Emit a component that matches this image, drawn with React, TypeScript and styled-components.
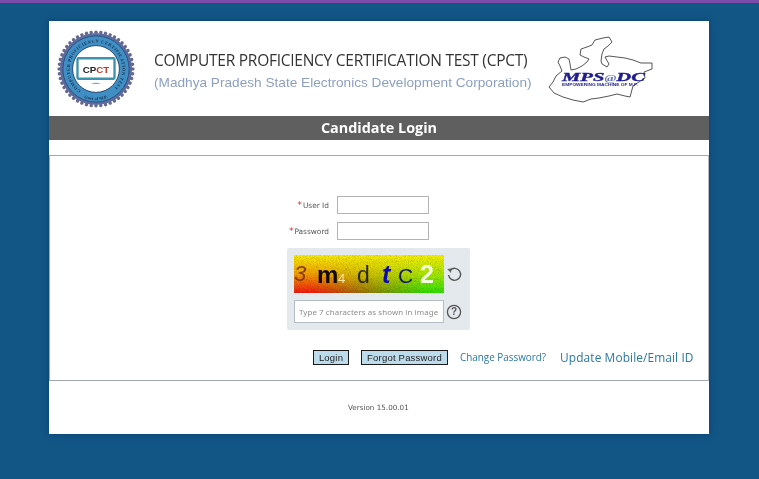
import { createGlobalStyle, styled } from 'styled-components'
import { useId } from 'react'

const Global = createGlobalStyle`
    html, body {
        margin: 0;
        padding: 0;
        height: 100%;
        background: #125686;
    }
    #root { height: 100%; }
`
const Page = styled.div`
    width: 759px;
    height: 479px;
    overflow: hidden;
    background: #125686;
    border-top: 3px solid #7a4ba8;
    box-sizing: border-box;
    padding-top: 18px;
`
const Card = styled.main`
    width: 660px;
    height: 413px;
    margin-left: 49px;
    background: #fff;
    box-shadow: 0 0 6px rgba(6, 50, 90, 0.65);
`
const Banner = styled.header`
    height: 95px;
    display: flex;
    align-items: center;
    padding-left: 8px;
`
const Titles = styled.div`
    margin-left: 19px;
    width: 393px;
    padding-top: 5px;
`
const MainTitle = styled.div`
    font: 15.5px/20px "Open Sans", "Noto Sans", sans-serif;
    color: #333;
    white-space: nowrap;
    letter-spacing: -0.26px;
`
const SubTitle = styled.div`
    font: 13.65px/20px "Liberation Sans", sans-serif;
    color: #8d9fc0;
    white-space: nowrap;
    margin-top: 3px;
`
const MapLogo = styled.svg`
    flex-shrink: 0;
`
const TitleBar = styled.h1`
    margin: 0;
    height: 24px;
    background: #5f5f5f;
    color: #fff;
    font: bold 14.4px/24px "Open Sans", sans-serif;
    text-align: center;
`
const Panel = styled.section`
    margin-top: 15px;
    height: 226px;
    box-sizing: border-box;
    border: 1px solid #a3a7ae;
    border-right-color: #b9bcc2;
    padding-top: 40px;
    display: flex;
    flex-direction: column;
`
const Row = styled.div`
    display: flex;
    align-items: center;
    height: 18px;
    margin-bottom: 8px;
`
const Label = styled.label`
    width: 279px;
    text-align: right;
    font: 7.4px/16px "DejaVu Sans", sans-serif;
    color: #555;
    margin-right: 8px;
`
const Star = styled.span`
    color: #d9302c;
    font-size: 9px;
    margin-right: 1px;
`
const TextInput = styled.input`
    width: 92px;
    height: 18px;
    box-sizing: border-box;
    border: 1px solid #b4b4b4;
    background: #fff;
    padding: 0;
`
const CaptchaBox = styled.div`
    margin-left: 237px;
    width: 183px;
    height: 82px;
    box-sizing: border-box;
    padding: 7px;
    background: #e3e9ed;
    border-radius: 2px;
    display: grid;
    grid-template-columns: 150px 20px;
    grid-template-rows: 38px 23px;
    row-gap: 7px;
    column-gap: 1px;
`
const CaptchaImage = styled.div`
    position: relative;
    overflow: hidden;
    background: linear-gradient(to bottom, #f8ee00 0%, #f4a000 50%, #f01a10 100%);
`
const CaptchaFade = styled.div`
    position: absolute;
    inset: 0;
    background: linear-gradient(to bottom, #f8f000 0%, #a8e800 50%, #30e000 100%);
    mask-image: linear-gradient(to right, transparent 12%, black 88%);
`
const Noise = styled.svg`
    position: absolute;
    inset: 0;
    mix-blend-mode: multiply;
`
const Glyph = styled.span<{ $left: number; $size: number; $color: string; $dy?: number; $bold?: boolean; $italic?: boolean }>`
    position: absolute;
    left: ${p => p.$left}px;
    top: calc(50% + ${p => p.$dy ?? 0}px);
    transform: translateY(-50%);
    font-family: "Liberation Sans", sans-serif;
    font-size: ${p => p.$size}px;
    font-weight: ${p => (p.$bold ? 700 : 400)};
    font-style: ${p => (p.$italic ? 'italic' : 'normal')};
    color: ${p => p.$color};
    line-height: 1;
`
const IconCell = styled.div`
    display: flex;
    align-items: center;
    justify-content: center;
    padding-right: 2px;
`
const CaptchaInput = styled.input`
    width: 150px;
    height: 23px;
    box-sizing: border-box;
    border: 1px solid #b5bcc4;
    background: #fff;
    padding: 0 4px;
    font: 7.9px "Noto Sans", sans-serif;
    letter-spacing: 0.1px;
    &::placeholder { color: #8c8c8c; opacity: 1; }
`
const Actions = styled.div`
    display: flex;
    align-items: center;
    margin-top: 19px;
    margin-left: 263px;
`
const Btn = styled.button<{ $w: number }>`
    flex-shrink: 0;
    width: ${p => p.$w}px;
    height: 15px;
    margin-right: 12px;
    box-sizing: border-box;
    padding: 0;
    background: #bcdcec;
    border: 1px solid #1a1a1a;
    font: 9.5px/13px "Liberation Sans", sans-serif;
    color: #222;
    letter-spacing: 0.2px;
`
const ActionLink = styled.a`
    font: 9.9px/16px "Open Sans", sans-serif;
    color: #2b79a5;
    white-space: nowrap;
    margin-right: 14px;
`
const ActionLinkBig = styled(ActionLink)`
    font-size: 11.9px;
    letter-spacing: 0.1px;
    margin-right: 0;
`
const Version = styled.footer`
    padding-top: 21px;
    padding-left: 299px;
    font: 7.2px/12px "DejaVu Sans", sans-serif;
    color: #555;
`

function Seal() {
    const id = useId().replace(/:/g, '')
    const teeth = Array.from({ length: 48 }, (_, i) => i * 7.5)
    return (
        <svg width="78" height="78" viewBox="0 0 80 80">
            <defs>
                <path id={id + 't'} d="M24.5 62.1 A27 27 0 1 1 55.5 62.1" />
                <path id={id + 'b'} d="M21.6 66.2 A32 32 0 0 0 58.4 66.2" />
            </defs>
            {teeth.map(a => (
                <circle key={a} cx="40" cy="2.2" r="1.8" fill="#66688f" transform={`rotate(${a} 40 40)`} />
            ))}
            <circle cx="40" cy="40" r="37" fill="#5b6c9c" />
            <circle cx="40" cy="40" r="34" fill="#3f8fc4" stroke="#2c4f80" strokeWidth="1" />
            <circle cx="40" cy="40" r="24" fill="#fff" stroke="#23466f" strokeWidth="1" />
            <text fontSize="4.6" fontFamily="Liberation Serif, serif" fontWeight="700" fill="#18304f" letterSpacing="0.55">
                <textPath href={`#${id}t`}>COMPUTER PROFICIENCY CERTIFICATION TEST</textPath>
            </text>
            <text fontSize="4.6" fontFamily="Liberation Serif, serif" fontWeight="700" fill="#18304f" textAnchor="middle">
                <textPath href={`#${id}b`} startOffset="50%">Govt of M.P.</textPath>
            </text>
            <rect x="21" y="29" width="38" height="21" rx="1" fill="#fff" stroke="#3d92ad" strokeWidth="2.4" />
            <text x="40" y="44" textAnchor="middle" fontSize="10" fontWeight="700" fontFamily="Liberation Sans, sans-serif" fill="#222">
                CP<tspan fill="#c0392b">CT</tspan>
            </text>
            <path d="M35 55 q5 -2 10 0 z" fill="#3d92ad" />
        </svg>
    )
}

function MpMap() {
    return (
        <MapLogo width="106" height="68" viewBox="0 0 106 68">
            <path
                d="M2 52 L6 47 L9 41 L15 36 L13 31 L11 27 L13 23 L18 22 L22 24 L23 29 L24 35 L29 34 L35 31 L40 27 L42 24 L37 22 L33 20 L34 14 L40 12 L45 10 L48 5 L56 3 L62 2 L65 7 L61 11 L57 14 L55 19 L54 26 L55 29 L60 32 L62 29 L58 22 L62 21 L70 22 L78 23 L86 25 L94 28 L105 28 L105 34 L97 37 L98 43 L92 47 L86 51 L83 62 L78 61 L70 59 L62 61 L52 63 L44 64 L36 67 L26 65 L16 62 L7 58 Z"
                fill="#fff"
                stroke="#2a2a2a"
                strokeWidth="0.8"
                strokeLinejoin="round"
            />
            <text x="15" y="46" textLength="83" lengthAdjust="spacingAndGlyphs" fontSize="13" fontWeight="700" fontStyle="italic" fontFamily="Liberation Serif, serif" fill="#1d1d8f" stroke="#1d1d8f" strokeWidth="0.35">
                MPS<tspan fontSize="9" fill="#6a74b0" stroke="none">@</tspan>DC
            </text>
            <text x="15" y="51" textLength="76" lengthAdjust="spacingAndGlyphs" fontSize="3.4" fontWeight="700" fontFamily="Liberation Sans, sans-serif" fill="#1d1d8f">
                EMPOWERING MACHINE OF M.P.
            </text>
        </MapLogo>
    )
}

function RefreshIcon() {
    return (
        <svg width="17" height="17" viewBox="0 0 17 17" fill="none" stroke="#555" strokeWidth="1.4">
            <path d="M4.2 4.2 A6 6 0 1 1 2.6 9" />
            <path d="M1.6 3.4 L5 3 L4.6 6.6" fill="#555" strokeWidth="0.8" />
        </svg>
    )
}

function HelpIcon() {
    return (
        <svg width="16" height="16" viewBox="0 0 16 16" fill="none">
            <circle cx="8" cy="8" r="6.6" stroke="#555" strokeWidth="1.3" />
            <text x="8" y="11.4" textAnchor="middle" fontSize="10" fontWeight="700" fontFamily="Liberation Sans, sans-serif" fill="#555">?</text>
        </svg>
    )
}

function Captcha() {
    const id = useId().replace(/:/g, '')
    return (
        <CaptchaImage>
            <CaptchaFade />
            <Noise width="150" height="38">
                <filter id={id}>
                    <feTurbulence type="fractalNoise" baseFrequency="1.1" numOctaves="2" seed="4" />
                    <feColorMatrix values="0 0 0 0 0.4  0 0 0 0 0.35  0 0 0 0 0.1  1.3 0 0 0 -0.55" />
                </filter>
                <rect width="150" height="38" filter={`url(#${id})`} />
            </Noise>
            <Glyph $left={0} $size={22} $color="#8a3a10" $italic>3</Glyph>
            <Glyph $left={23} $size={24} $color="#120a00" $bold $dy={1}>m</Glyph>
            <Glyph $left={44} $size={13} $color="#f4e6a0" $dy={4}>4</Glyph>
            <Glyph $left={63} $size={23} $color="#2a2a10" $dy={1}>d</Glyph>
            <Glyph $left={88} $size={25} $color="#0a0ab0" $bold $italic>t</Glyph>
            <Glyph $left={104} $size={21} $color="#0e1a6e" $dy={1}>C</Glyph>
            <Glyph $left={126} $size={25} $color="#f2fbe0" $bold>2</Glyph>
        </CaptchaImage>
    )
}

export default function App() {
    return (
        <>
            <Global />
            <Page>
                <Card>
                    <Banner>
                        <Seal />
                        <Titles>
                            <MainTitle>COMPUTER PROFICIENCY CERTIFICATION TEST (CPCT)</MainTitle>
                            <SubTitle>(Madhya Pradesh State Electronics Development Corporation)</SubTitle>
                        </Titles>
                        <MpMap />
                    </Banner>
                    <TitleBar>Candidate Login</TitleBar>
                    <Panel>
                        <Row>
                            <Label><Star>*</Star>User Id</Label>
                            <TextInput type="text" />
                        </Row>
                        <Row>
                            <Label><Star>*</Star>Password</Label>
                            <TextInput type="password" />
                        </Row>
                        <CaptchaBox>
                            <Captcha />
                            <IconCell><RefreshIcon /></IconCell>
                            <CaptchaInput placeholder="Type 7 characters as shown in image" />
                            <IconCell><HelpIcon /></IconCell>
                        </CaptchaBox>
                        <Actions>
                            <Btn $w={36}>Login</Btn>
                            <Btn $w={87}>Forgot Password</Btn>
                            <ActionLink>Change Password?</ActionLink>
                            <ActionLinkBig>Update Mobile/Email ID</ActionLinkBig>
                        </Actions>
                    </Panel>
                    <Version>Version 15.00.01</Version>
                </Card>
            </Page>
        </>
    )
}
